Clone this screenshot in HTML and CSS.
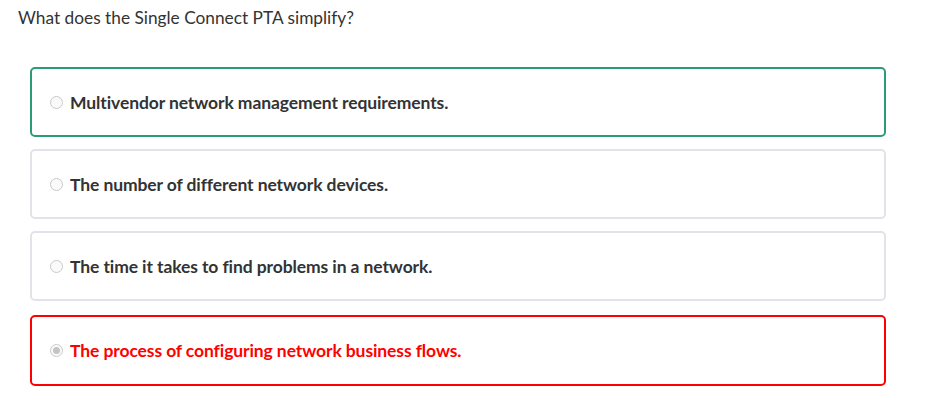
FILE: index.html
```html
<!DOCTYPE html>
<html>
<head>
<meta charset="utf-8">
<link rel="stylesheet" href="styles.css">
</head>
<body>
<div class="quiz">
  <p class="question">What does the Single Connect PTA simplify?</p>
  <div class="options">
    <div class="option selected"><span class="radio"></span><span class="label">Multivendor network management requirements.</span></div>
    <div class="option"><span class="radio"></span><span class="label">The number of different network devices.</span></div>
    <div class="option"><span class="radio"></span><span class="label">The time it takes to find problems in a network.</span></div>
    <div class="option wrong"><span class="radio checked"></span><span class="label">The process of configuring network business flows.</span></div>
  </div>
</div>
</body>
</html>
```

FILE: styles.css
```css
html, body { margin: 0; padding: 0; background: #fff; }
body { font-family: Lato, "Open Sans", sans-serif; color: #333; }
.quiz { padding: 8px 0 0 18px; }
.question { margin: 0; font-size: 17.3px; line-height: 20px; color: #333; }
.options { margin: 39px 0 0 12px; width: 856px; display: flex; flex-direction: column; gap: 12px; }
.option {
  box-sizing: border-box;
  height: 70px;
  border: 2px solid #e0e4e8;
  border-radius: 5px;
  display: flex;
  align-items: center;
  padding-left: 18px;
  gap: 7px;
}
.option.selected { border-color: #2e9b78; }
.option.wrong { border-color: #f00; margin-top: 2px; height: 71px; }
.label { font-weight: bold; font-size: 17.5px; color: #333; letter-spacing: -0.1px; }
.option.wrong .label { color: #f00; }
.radio {
  box-sizing: border-box;
  width: 13px; height: 13px;
  border-radius: 50%;
  border: 1px solid #c9c9c9;
  background: #fafafa;
  position: relative;
}
.radio.checked::after {
  content: "";
  position: absolute;
  left: 2px; top: 2px;
  width: 7px; height: 7px;
  border-radius: 50%;
  background: #c4c4c4;
}
```
